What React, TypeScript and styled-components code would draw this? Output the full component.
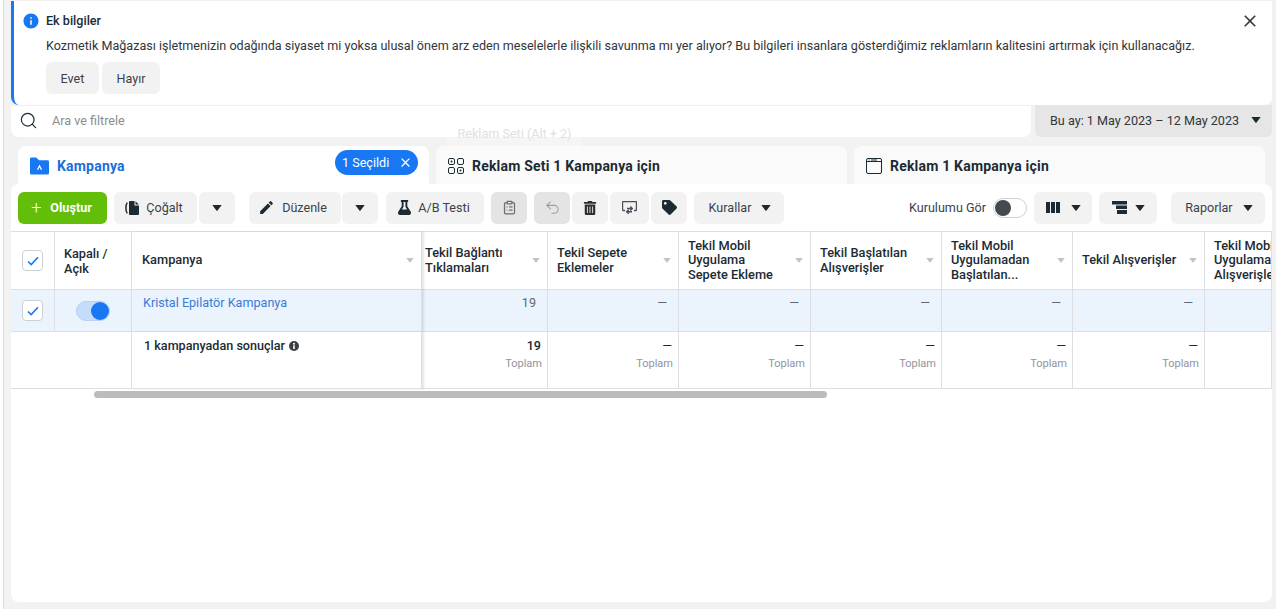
import React from 'react'
import styled, { createGlobalStyle, css } from 'styled-components'
import { MdClose, MdEdit, MdInfo } from 'react-icons/md'
import { FaFlask, FaTag, FaTrashAlt } from 'react-icons/fa'
import { ClipboardList, Search, Undo2 } from 'lucide-react'

const GlobalStyle = createGlobalStyle`
  * { box-sizing: border-box; }
  html, body { margin: 0; padding: 0; background: #fff; height: 100%; }
  body { font-family: Roboto, "Liberation Sans", sans-serif; color: #1c1e21; overflow: hidden; }
`

const Caret = ({ color = '#1c2b33', size = 10 }: { color?: string; size?: number }) => (
  <svg width={size} height={size * 0.6} viewBox="0 0 10 6">
    <path d="M0.3 0h9.4L5.6 5.4a.8.8 0 0 1-1.2 0z" fill={color} />
  </svg>
)

const CopyIcon = () => (
  <svg width="16" height="16" viewBox="0 0 16 16">
    <path d="M6 1h4.500v4.500H15V14a1 1 0 0 1-1 1H6a1 1 0 0 1-1-1V2a1 1 0 0 1 1-1z" fill="#1c2b33" />
    <path d="M11.500 1.200 14.800 4.500h-3.300z" fill="#1c2b33" />
    <path d="M3.200 2.600C1.500 5 1.500 11 3.200 13.400" stroke="#1c2b33" strokeWidth="1.500" fill="none" />
  </svg>
)

const ShareIcon = () => (
  <svg width="15" height="14" viewBox="0 0 15 14" fill="none" stroke="#4b4f56" strokeWidth="1.400">
    <path d="M3 9.500H1.500a1 1 0 0 1-1-1v-7a1 1 0 0 1 1-1h12a1 1 0 0 1 1 1v7a1 1 0 0 1-1 1H12" />
    <path d="M5 7.500h5M8.300 5.500l2 2-2 2" />
    <path d="M10 10.800H5M6.700 8.800l-2 2 2 2" />
  </svg>
)

const ColumnsIcon = () => (
  <svg width="14" height="11" viewBox="0 0 14 11" fill="#1c2b33">
    <rect width="4" height="11" />
    <rect x="5" width="4" height="11" />
    <rect x="10" width="4" height="11" />
  </svg>
)

const BreakdownIcon = () => (
  <svg width="15" height="13" viewBox="0 0 15 13" fill="#1c2b33">
    <rect width="15" height="3.500" />
    <rect x="4" y="4.500" width="11" height="3.500" />
    <rect x="5" y="9" width="10" height="4" />
  </svg>
)

const FolderIcon = () => (
  <svg width="19" height="18" viewBox="0 0 20 18">
    <path d="M0 1.500A1.500 1.500 0 0 1 1.500 0h5l3 3h9A1.500 1.500 0 0 1 20 4.500v12a1.500 1.500 0 0 1-1.500 1.500h-17A1.500 1.500 0 0 1 0 16.500z" fill="#1877f2" />
    <path d="M10 7.500 7.200 13h1.500l1.300-2.800 1.300 2.800h1.500z" fill="#fff" />
  </svg>
)

const AdSetIcon = () => (
  <svg width="16" height="16" viewBox="0 0 16 16" fill="none" stroke="#1c2b33">
    <rect x=".5" y=".5" width="6" height="6" rx="1.500" />
    <rect x="9.500" y=".5" width="6" height="6" rx="1.500" />
    <rect x=".5" y="9.500" width="6" height="6" rx="1.500" />
    <rect x="9.500" y="9.500" width="6" height="6" rx="1.500" />
    <circle cx="3.500" cy="3.500" r="1" fill="#1c2b33" stroke="none" />
    <circle cx="12.500" cy="12.500" r="1" fill="#1c2b33" stroke="none" />
  </svg>
)

const AdIcon = () => (
  <svg width="16" height="16" viewBox="0 0 16 16" fill="none" stroke="#1c2b33">
    <rect x=".5" y=".5" width="15" height="15" rx="1.500" />
    <path d="M.5 3.500h15" />
    <path d="M2.500 2h1M5 2h6" />
  </svg>
)

const InfoDot = () => (
  <svg width="10" height="10" viewBox="0 0 10 10">
    <circle cx="5" cy="5" r="5" fill="#3a3f44" />
    <rect x="4.200" y="4.300" width="1.600" height="3.700" fill="#fff" />
    <circle cx="5" cy="2.800" r="1" fill="#fff" />
  </svg>
)

const Check = () => (
  <svg width="12" height="10" viewBox="0 0 12 10" fill="none" stroke="#1877f2" strokeWidth="1.600">
    <path d="M1 5.500 4.200 8.500 11 1.300" />
  </svg>
)

const Page = styled.div`
  margin-left: 3px;
  height: 609px;
  border-left: 1px solid #dcdcdc;
  background: #f2f2f2;
  padding: 1px 4px 7px 7px;
  display: flex;
  flex-direction: column;
  position: relative;
`

const Banner = styled.section`
  height: 104px;
  flex: none;
  background: #fff;
  border-left: 3px solid #1877f2;
  border-radius: 0 0 8px 8px;
  padding: 10px 13px 0 10px;
  position: relative;
`

const BannerTitle = styled.div`
  display: flex;
  align-items: center;
  gap: 6px;
  height: 19px;
  font-size: 12.600px;
  font-weight: 500;
  color: #1c2b33;
`

const BannerText = styled.p`
  margin: 7px 0 0 22px;
  font-size: 12.590px;
  line-height: 17px;
  color: #30363b;
  white-space: nowrap;
`

const BannerActions = styled.div`
  display: flex;
  gap: 3px;
  margin: 8px 0 0 22px;
`

const BannerClose = styled.button`
  position: absolute;
  top: 10px;
  right: 12px;
  padding: 0;
  border: 0;
  background: none;
  display: flex;
  color: #3a3f44;
`

const Button = styled.button<{ $dim?: boolean; $w?: number; $ml?: number; $gap?: number; $pr?: number; $pl?: number }>`
  height: 32px;
  border: 0;
  border-radius: 6px;
  background: ${p => (p.$dim ? '#e4e4e4' : '#f2f2f2')};
  color: #3a4248;
  font: 400 12.600px Roboto, sans-serif;
  display: inline-flex;
  align-items: center;
  justify-content: center;
  gap: ${p => p.$gap ?? 7}px;
  padding: 0 ${p => p.$pr ?? 0}px 0 ${p => p.$pl ?? 0}px;
  flex: none;
  width: ${p => (p.$w ? `${p.$w}px` : 'auto')};
  margin-left: ${p => p.$ml ?? 0}px;
`

const FilterRow = styled.div`
  display: flex;
  gap: 4px;
  height: 32px;
  flex: none;
`

const SearchBox = styled.div`
  flex: 1;
  background: #fff;
  border-radius: 0 0 8px 8px;
  display: flex;
  align-items: center;
  gap: 14px;
  padding: 0 0 3px 8px;
  color: #8a8d91;
  font-size: 12.600px;
  border-top: 1px solid #f0f0f0;
`

const DateButton = styled.button`
  width: 237px;
  border: 0;
  border-radius: 0 0 6px 6px;
  background: #e6e6e6;
  color: #30363b;
  font: 400 12.600px Roboto, sans-serif;
  display: flex;
  align-items: center;
  justify-content: space-between;
  padding: 0 11px 2px 15px;
`

const Tooltip = styled.div`
  position: absolute;
  left: 443px;
  top: 113px;
  width: 135px;
  height: 37px;
  padding-top: 13px;
  text-align: center;
  border-radius: 6px;
  font-size: 12.600px;
  color: #e0e0e0;
  background: rgba(255, 255, 255, 0.25);
  pointer-events: none;
`

const Tabs = styled.div`
  display: flex;
  gap: 7px;
  margin: 9px 7px 0;
  height: 38px;
  flex: none;
`

const Tab = styled.div<{ $active?: boolean }>`
  flex: 1;
  min-width: 0;
  border-radius: 8px 8px 0 0;
  background: ${p => (p.$active ? '#fff' : '#fafafa')};
  display: flex;
  align-items: center;
  gap: 8px;
  padding: 2px 11px 0 12px;
  font-size: 14px;
  font-weight: 700;
  letter-spacing: 0.200px;
  color: ${p => (p.$active ? '#1a6ed8' : '#1c2b33')};
`

const SelectedPill = styled.div`
  margin: 0 0 7px auto;
  width: 83px;
  height: 25px;
  border-radius: 13px;
  background: #1877f2;
  color: #fff;
  font-size: 12.600px;
  font-weight: 400;
  letter-spacing: 0;
  display: flex;
  align-items: center;
  gap: 9px;
  padding: 0 0 0 7px;
  flex: none;
`

const Card = styled.div`
  flex: 1;
  min-height: 0;
  background: #fff;
  border-radius: 8px;
  display: flex;
  flex-direction: column;
  overflow: hidden;
`

const Toolbar = styled.div`
  height: 47px;
  flex: none;
  display: flex;
  align-items: center;
  padding: 0 7px;
`

const CreateButton = styled(Button)`
  width: 89px;
  background: #63be09;
  color: #fff;
  font-weight: 700;
  gap: 9px;
  padding-right: 2px;
`

const ToggleLabel = styled.span`
  margin-left: auto;
  font-size: 12.600px;
  color: #3a4248;
`

const SwitchOff = styled.span`
  width: 34px;
  height: 20px;
  margin: 0 7px;
  border: 1px solid #ccd0d5;
  border-radius: 10px;
  background: #fff;
  display: flex;
  align-items: center;
  padding-left: 1px;
  flex: none;
  &::before {
    content: '';
    width: 16px;
    height: 16px;
    border-radius: 50%;
    background: #444950;
  }
`

const TableGrid = styled.div`
  display: grid;
  grid-template-columns: 44px 77px 290px 126px 131px 132px 131px 131px 132px 67px;
  grid-template-rows: 58px 42px 57px;
  border-top: 1px solid #dddfe2;
  flex: none;
`

const Cell = styled.div<{ $row: 'head' | 'data' | 'sum' }>`
  min-width: 0;
  overflow: hidden;
  border-right: 1px solid #dddfe2;
  border-bottom: 1px solid #dddfe2;
  background: ${p => (p.$row === 'data' ? '#ebf3fd' : '#fff')};
  font-size: 12.600px;
  color: #1c2b33;
  position: relative;
`

const CheckCell = styled(Cell)`
  display: flex;
  align-items: center;
  justify-content: center;
`

const CheckBox = styled.span`
  width: 21px;
  height: 21px;
  border: 1px solid #ccd0d5;
  border-radius: 4px;
  background: #fff;
  display: flex;
  align-items: center;
  justify-content: center;
`

const HeadCell = styled(Cell)<{ $pl?: number }>`
  display: flex;
  align-items: center;
  justify-content: space-between;
  padding: 0 7px 0 ${p => p.$pl ?? 9}px;
  font-size: 12.800px;
  font-weight: 500;
  line-height: 14.500px;
`

const frozen = css`
  box-shadow: 2px 0 2px rgba(0, 0, 0, 0.1);
  z-index: 1;
`

const FrozenCell = styled(Cell)`
  ${frozen}
`

const FrozenHead = styled(HeadCell)`
  ${frozen}
`

const StatusHead = styled(Cell)`
  padding: 14px 0 0 9px;
  font-size: 12.700px;
  font-weight: 500;
  line-height: 15px;
`

const SwitchOn = styled.span`
  width: 34px;
  height: 20px;
  margin: 11px 0 0 21px;
  border-radius: 10px;
  background: #c6dcfb;
  border: 1px solid #b7d0f3;
  display: flex;
  justify-content: flex-end;
  align-items: center;
  &::before {
    content: '';
    width: 18px;
    height: 18px;
    border-radius: 50%;
    background: #1877f2;
  }
`

const CampaignLink = styled.div`
  padding: 5px 0 0 11px;
  color: #3b7bd6;
  line-height: 15px;
`

const SummaryTitle = styled.div`
  padding: 6px 0 0 12px;
  font-size: 12.600px;
  font-weight: 500;
  display: flex;
  align-items: center;
  gap: 4px;
  line-height: 15px;
`

const HeadLines = styled.div`
  white-space: nowrap;
`

const NumValue = styled.div`
  text-align: right;
  padding: 5px 11px 0 0;
  line-height: 15px;
  color: #606770;
`

const SummaryValue = styled.div<{ $bold?: boolean }>`
  text-align: right;
  padding: 6px 6px 0 0;
  line-height: 15px;
  color: #1c2b33;
  font-weight: ${p => (p.$bold ? 500 : 400)};
`

const TotalLabel = styled.div`
  text-align: right;
  padding: 4px 5px 0 0;
  font-size: 11px;
  line-height: 13px;
  color: #90949c;
`

const ScrollThumb = styled.div`
  width: 733px;
  height: 7px;
  margin: 2px 0 0 83px;
  border-radius: 4px;
  background: #bcbcbc;
  flex: none;
`

const columns = [
  { title: ['Tekil Bağlantı', 'Tıklamaları'], value: '19', pl: 3 },
  { title: ['Tekil Sepete', 'Eklemeler'], value: '—' },
  { title: ['Tekil Mobil', 'Uygulama', 'Sepete Ekleme'], value: '—' },
  { title: ['Tekil Başlatılan', 'Alışverişler'], value: '—' },
  { title: ['Tekil Mobil', 'Uygulamadan', 'Başlatılan...'], value: '—' },
  { title: ['Tekil Alışverişler'], value: '—' },
  { title: ['Tekil Mobil', 'Uygulama', 'Alışverişleri'], value: '', noCaret: true },
]

export default function App() {
  return (
    <>
      <GlobalStyle />
      <Page>
        <Banner>
          <BannerTitle>
            <MdInfo size={18} color="#1877f2" style={{ marginLeft: -2 }} />
            Ek bilgiler
          </BannerTitle>
          <BannerText>
            Kozmetik Mağazası işletmenizin odağında siyaset mi yoksa ulusal önem arz eden meselelerle ilişkili savunma mı yer alıyor? Bu bilgileri insanlara gösterdiğimiz reklamların kalitesini artırmak için kullanacağız.
          </BannerText>
          <BannerActions>
            <Button $w={53}>Evet</Button>
            <Button $w={58}>Hayır</Button>
          </BannerActions>
          <BannerClose>
            <MdClose size={20} />
          </BannerClose>
        </Banner>

        <FilterRow>
          <SearchBox>
            <Search size={19} color="#1c2b33" strokeWidth={1.5} />
            Ara ve filtrele
          </SearchBox>
          <DateButton>
            Bu ay: 1 May 2023 – 12 May 2023
            <Caret />
          </DateButton>
        </FilterRow>

        <Tooltip>Reklam Seti (Alt + 2)</Tooltip>

        <Tabs>
          <Tab $active>
            <FolderIcon />
            Kampanya
            <SelectedPill>
              1 Seçildi
              <MdClose size={15} />
            </SelectedPill>
          </Tab>
          <Tab>
            <AdSetIcon />
            Reklam Seti 1 Kampanya için
          </Tab>
          <Tab>
            <AdIcon />
            Reklam 1 Kampanya için
          </Tab>
        </Tabs>

        <Card>
          <Toolbar>
            <CreateButton>
              <span style={{ fontSize: 18, fontWeight: 300, lineHeight: '18px' }}>+</span>
              Oluştur
            </CreateButton>
            <Button $w={83} $ml={7} $gap={6} $pr={4}><CopyIcon />Çoğalt</Button>
            <Button $w={36} $ml={2}><Caret /></Button>
            <Button $w={92} $ml={14} $pr={5}><MdEdit size={17} color="#1c2b33" />Düzenle</Button>
            <Button $w={36} $ml={1}><Caret /></Button>
            <Button $w={98} $ml={8} $gap={6} $pr={3}><FaFlask size={15} color="#1c2b33" />A/B Testi</Button>
            <Button $w={36} $ml={7} $dim><ClipboardList size={15} color="#6a6f75" /></Button>
            <Button $w={36} $ml={7} $dim><Undo2 size={17} color="#9a9ea3" strokeWidth={1.5} /></Button>
            <Button $w={36} $ml={2}><FaTrashAlt size={14} color="#2b2f33" /></Button>
            <Button $w={39} $ml={2}><ShareIcon /></Button>
            <Button $w={36} $ml={2}><FaTag size={15} color="#1c2b33" /></Button>
            <Button $w={90} $ml={7} $gap={10} $pl={2}>Kurallar<Caret /></Button>
            <ToggleLabel>Kurulumu Gör</ToggleLabel>
            <SwitchOff />
            <Button $w={58} $gap={11}><ColumnsIcon /><Caret /></Button>
            <Button $w={58} $ml={7} $gap={8}><BreakdownIcon /><Caret /></Button>
            <Button $w={94} $ml={14} $gap={10} $pl={2}>Raporlar<Caret /></Button>
          </Toolbar>

          <TableGrid>
            <CheckCell $row="head"><CheckBox><Check /></CheckBox></CheckCell>
            <StatusHead $row="head">Kapalı /<br />Açık</StatusHead>
            <FrozenHead $row="head" $pl={10}>
              Kampanya
              <Caret color="#bec3c9" size={8} />
            </FrozenHead>
            {columns.map((c, i) => (
              <HeadCell key={i} $row="head" $pl={c.pl}>
                <HeadLines>
                  {c.title.map(l => (
                    <div key={l}>{l}</div>
                  ))}
                </HeadLines>
                {!c.noCaret && <Caret color="#bec3c9" size={8} />}
              </HeadCell>
            ))}

            <CheckCell $row="data"><CheckBox><Check /></CheckBox></CheckCell>
            <Cell $row="data"><SwitchOn /></Cell>
            <FrozenCell $row="data"><CampaignLink>Kristal Epilatör Kampanya</CampaignLink></FrozenCell>
            {columns.map((c, i) => (
              <Cell key={i} $row="data"><NumValue>{c.value}</NumValue></Cell>
            ))}

            <Cell $row="sum" style={{ borderRight: 0 }} />
            <Cell $row="sum" />
            <FrozenCell $row="sum">
              <SummaryTitle>1 kampanyadan sonuçlar <InfoDot /></SummaryTitle>
            </FrozenCell>
            {columns.map((c, i) => (
              <Cell key={i} $row="sum">
                {c.value && (
                  <>
                    <SummaryValue $bold={c.value !== '—'}>{c.value}</SummaryValue>
                    <TotalLabel>Toplam</TotalLabel>
                  </>
                )}
              </Cell>
            ))}
          </TableGrid>
          <ScrollThumb />
        </Card>
      </Page>
    </>
  )
}
